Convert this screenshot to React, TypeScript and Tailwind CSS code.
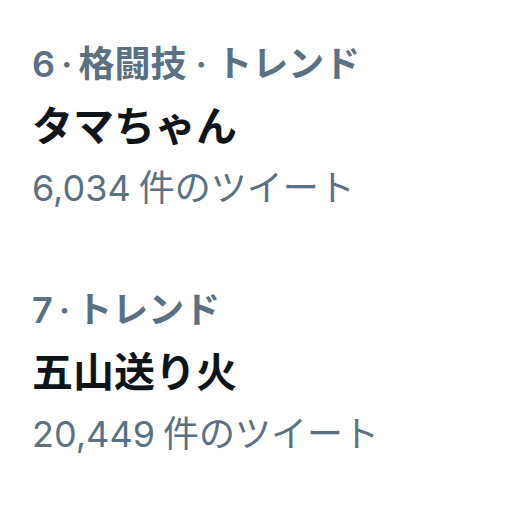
import React from 'react';

type Trend = {
  rank: number;
  context: string;
  name: string;
  count: string;
};

const trends: Trend[] = [
  { rank: 6, context: '格闘技 · トレンド', name: 'タマちゃん', count: '6,034' },
  { rank: 7, context: 'トレンド', name: '五山送り火', count: '20,449' },
];

const App: React.FC = () => {
  return (
    <div
      className="w-[512px] h-[512px] bg-white overflow-hidden pt-[33px] px-[32px]"
      style={{ fontFamily: 'Inter, "Noto Sans CJK JP", sans-serif' }}
    >
      <div className="flex flex-col gap-[60px]">
        {trends.map((t) => (
          <div key={t.rank} className="flex flex-col">
            <div className="text-[36px] leading-[62px] font-semibold text-[#5b7083] whitespace-nowrap">
              {t.rank}
              <span className="mx-[6px]">·</span>
              {t.context}
            </div>
            <div className="text-[41px] leading-[62px] font-bold text-[#0f1419] whitespace-nowrap">
              {t.name}
            </div>
            <div className="text-[36px] leading-[62px] text-[#5b7083] whitespace-nowrap">
              {t.count}
              <span className="ml-[8px]">件のツイート</span>
            </div>
          </div>
        ))}
      </div>
    </div>
  );
};

export default App;
